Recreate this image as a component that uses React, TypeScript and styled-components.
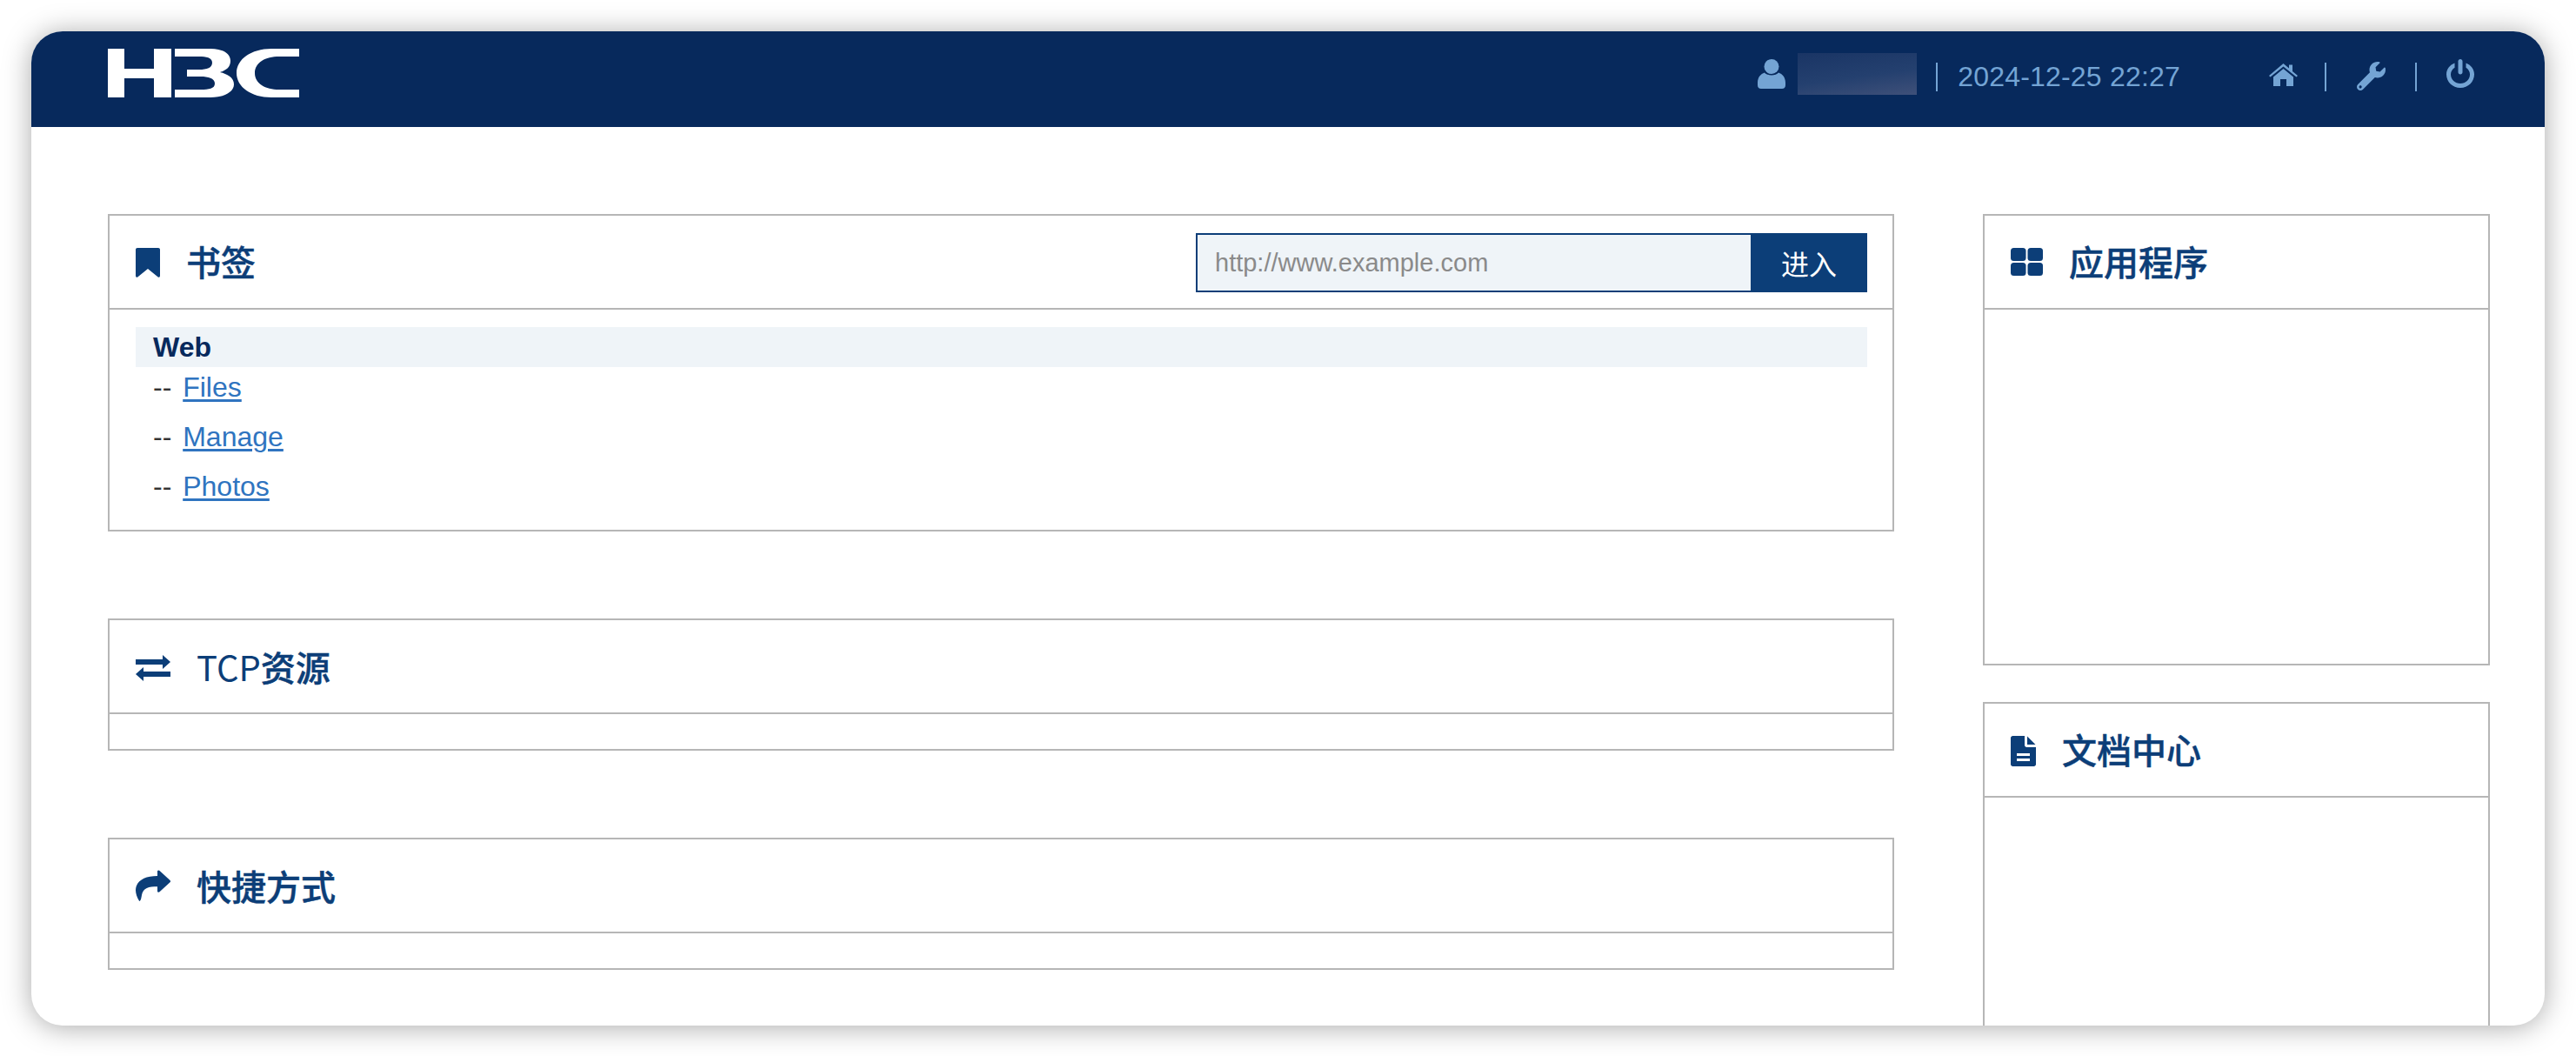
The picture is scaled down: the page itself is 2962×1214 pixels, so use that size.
import React from 'react';
import styled, { createGlobalStyle } from 'styled-components';
import { FaWrench } from 'react-icons/fa';

const Global = createGlobalStyle`
  html, body { margin: 0; padding: 0; background: #fff; }
  body { font-family: "Liberation Sans", "Noto Sans CJK SC", sans-serif; }
`;

const Page = styled.div`
  width: 2962px;
  height: 1214px;
  padding: 36px 36px 35px;
  box-sizing: border-box;
  overflow: hidden;
`;

const Win = styled.div`
  height: 100%;
  border-radius: 36px;
  background: #fff;
  overflow: hidden;
  display: flex;
  flex-direction: column;
  box-shadow: 0 2px 32px rgba(0, 0, 0, 0.34);
`;

const TopBar = styled.header`
  flex: none;
  height: 110px;
  box-sizing: border-box;
  background: #07295c;
  display: flex;
  align-items: center;
  justify-content: space-between;
  padding: 0 81px 12px 88px;
`;

const Logo = styled.svg`
  width: 220px;
  height: 56px;
  margin-top: -2px;
  fill: #fff;
  filter: blur(0.5px);
`;

const Status = styled.div`
  display: flex;
  align-items: center;
  color: #74a4d4;
`;

const Blur = styled.div`
  width: 137px;
  height: 48px;
  margin: 0 22px 0 14px;
  background: linear-gradient(172deg, #1a3565 0%, #24406f 55%, #3f5079 100%);
`;

const Sep = styled.span`
  width: 2px;
  height: 33px;
  margin-top: 7px;
  background: #74a4d4;
`;

const DateText = styled.span`
  font-size: 32px;
  line-height: 36px;
  letter-spacing: 0.2px;
  margin: 5px 102px 0 23px;
  white-space: nowrap;
`;

const Glyph = styled.svg<{ $w: number; $h: number; $mt?: number; $ml?: number; $mr?: number }>`
  width: ${(p) => p.$w}px;
  height: ${(p) => p.$h}px;
  margin: ${(p) => p.$mt ?? 0}px ${(p) => p.$mr ?? 0}px 0 ${(p) => p.$ml ?? 0}px;
  flex: none;
  fill: currentColor;
`;

const Wrench = styled(FaWrench)`
  width: 35px;
  height: 33px;
  margin: 5px 33px 0 34px;
`;

const Content = styled.main`
  flex: 1;
  min-height: 0;
  display: grid;
  grid-template-columns: 2054px 583px;
  column-gap: 102px;
  align-items: start;
  padding: 100px 63px 0 88px;
`;

const Column = styled.div<{ $gap: number }>`
  display: flex;
  flex-direction: column;
  gap: ${(p) => p.$gap}px;
`;

const Card = styled.section`
  border: 2px solid #b6b6b6;
`;

const CardHeader = styled.div<{ $pt?: number }>`
  height: 106px;
  box-sizing: border-box;
  padding: ${(p) => p.$pt ?? 2}px 29px 0 30px;
  display: flex;
  align-items: center;
  justify-content: space-between;
  color: #0c3e78;
`;

const CardBody = styled.div<{ $h: number }>`
  height: ${(p) => p.$h}px;
  box-sizing: border-box;
  border-top: 2px solid #b6b6b6;
`;

const BookmarkBody = styled(CardBody)`
  padding: 20px 29px 0 30px;
`;

const TitleRow = styled.div`
  display: flex;
  align-items: center;
  gap: 30px;
`;

const Title = styled.h2`
  margin: 0 0 4px;
  font-family: "Noto Sans CJK SC", "Liberation Sans", sans-serif;
  font-size: 40px;
  line-height: 56px;
  font-weight: 500;
  color: #0c3e78;
  -webkit-text-stroke: 0.5px #0c3e78;
`;

const LatinPart = styled.span`
  font-weight: 400;
  -webkit-text-stroke: 0;
`;

const Icon = styled.svg<{ $w: number; $h: number; $mb?: number }>`
  width: ${(p) => p.$w}px;
  height: ${(p) => p.$h}px;
  margin-bottom: ${(p) => p.$mb ?? 0}px;
  flex: none;
  fill: #0c3e78;
`;

const UrlForm = styled.form`
  display: flex;
  width: 772px;
  height: 68px;
  margin: 0;
`;

const UrlInput = styled.input`
  flex: 1;
  min-width: 0;
  box-sizing: border-box;
  height: 100%;
  border: 2px solid #0c3e78;
  border-right: 0;
  border-radius: 0;
  outline: none;
  background: #eff4f8;
  padding: 0 0 0 20px;
  font-family: "Liberation Sans", sans-serif;
  font-size: 29px;
  color: #333;
  &::placeholder { color: #8a8a8a; opacity: 1; }
`;

const Go = styled.button`
  width: 134px;
  height: 100%;
  border: 0;
  border-radius: 0;
  background: #0c3e78;
  color: #fff;
  font-family: "Noto Sans CJK SC", sans-serif;
  font-size: 32px;
  padding: 0;
`;

const GroupRow = styled.div`
  height: 46px;
  line-height: 46px;
  padding-left: 20px;
  background: #eff4f8;
  font-size: 32px;
  font-weight: 700;
  color: #07295c;
`;

const LinkRow = styled.div`
  height: 46px;
  line-height: 46px;
  padding-left: 20px;
  margin-bottom: 11px;
  font-size: 32px;
  color: #333;
`;

const Link = styled.a`
  margin-left: 4px;
  color: #2f74c0;
  text-decoration: underline;
  text-decoration-thickness: 3px;
  text-underline-offset: 3px;
`;

const links = ['Files', 'Manage', 'Photos'];

export default function App() {
  return (
    <>
      <Global />
      <Page>
        <Win>
          <TopBar>
            <Logo viewBox="0 0 220 56" aria-label="H3C">
              <path d="M0 0H19V23H53V0H73V56H53V34H19V56H0Z" />
              <path d="M77 0H118C133 0 141 6 141 14C141 21 136 25 129 27C137 29 145 33 145 41C145 50 133 56 118 56H77V47H107C116 47 123 46 123 40C123 34 115 32 107 32H91V24H105C114 24 120 22 120 16C120 10 113 9 105 9H77Z" />
              <path d="M220 0V9H197C181 9 169 16 169 28C169 40 181 47 197 47H220V56H188C165 56 148 44 148 28C148 12 165 0 188 0Z" />
            </Logo>
            <Status>
              <Glyph $w={32} $h={34} viewBox="0 0 32 34">
                <circle cx="16" cy="8.5" r="8.5" />
                <path d="M8 15.5C11 19.5 21 19.5 24 15.5C28.5 17 32 21 32 27V30C32 32.5 30.5 34 28 34H4C1.5 34 0 32.5 0 30V27C0 21 3.5 17 8 15.5Z" />
              </Glyph>
              <Blur />
              <Sep />
              <DateText>2024-12-25 22:27</DateText>
              <Glyph $w={33} $h={26} $mt={2} $mr={31} viewBox="0 0 33 26">
                <path d="M16.5 0L23 5.5V1.5H27V9L33 14L31.5 15.5L16.5 3.5L1.5 15.5L0 14Z" />
                <path d="M16.5 6L28 15.5V26H20V18H13V26H5V15.5Z" />
              </Glyph>
              <Sep />
              <Wrench />
              <Sep />
              <Glyph $w={32} $h={33} $mt={-1} $ml={34} viewBox="0 0 32 33">
                <path d="M16 0C17.4 0 18.5 1.1 18.5 2.5V15C18.5 16.4 17.4 17.5 16 17.5C14.6 17.5 13.5 16.4 13.5 15V2.5C13.5 1.1 14.6 0 16 0Z" />
                <path d="M9.5 4.5V9.8C6.6 11.6 5 14.5 5 17.5C5 23.6 10 28 16 28C22 28 27 23.6 27 17.5C27 14.5 25.4 11.6 22.5 9.8V4.5C28 6.6 32 11.6 32 17.5C32 26 25 33 16 33C7 33 0 26 0 17.5C0 11.6 4 6.6 9.5 4.5Z" />
              </Glyph>
            </Status>
          </TopBar>
          <Content>
            <Column $gap={100}>
              <Card>
                <CardHeader>
                  <TitleRow>
                    <Icon $w={28} $h={34} viewBox="0 0 28 34">
                      <path d="M2 0H26C27.2 0 28 .8 28 2V32C28 33.6 26.6 34.4 25.4 33.2L14 24L2.6 33.2C1.4 34.4 0 33.6 0 32V2C0 .8.8 0 2 0Z" />
                    </Icon>
                    <Title>书签</Title>
                  </TitleRow>
                  <UrlForm onSubmit={(e) => e.preventDefault()}>
                    <UrlInput placeholder="http://www.example.com" />
                    <Go type="submit">进入</Go>
                  </UrlForm>
                </CardHeader>
                <BookmarkBody $h={255}>
                  <GroupRow>Web</GroupRow>
                  {links.map((l) => (
                    <LinkRow key={l}>
                      -- <Link href="#">{l}</Link>
                    </LinkRow>
                  ))}
                </BookmarkBody>
              </Card>
              <Card>
                <CardHeader $pt={4}>
                  <TitleRow>
                    <Icon $w={40} $h={30} viewBox="0 0 40 30">
                      <path d="M0 5H31V0L40 8L31 16V11H0Z" />
                      <path d="M40 19H9V14L0 22L9 30V25H40Z" />
                    </Icon>
                    <Title>
                      <LatinPart>TCP</LatinPart>资源
                    </Title>
                  </TitleRow>
                </CardHeader>
                <CardBody $h={42} />
              </Card>
              <Card>
                <CardHeader $pt={4}>
                  <TitleRow>
                    <Icon $w={40} $h={36} $mb={4} viewBox="0 0 40 36">
                      <path d="M25 1.2C25.8.2 26.8.2 27.5 1L39.5 12C40.2 12.7 40.2 13.6 39.5 14.3L27.5 25.3C26.6 26.1 25 25.6 25 24.4V19.2C15 19.2 8.5 20.5 7 29C6.5 32 6 36 4.2 36C1.5 31.5 0 27 0 23.5C0 13 10 7 25 7Z" />
                    </Icon>
                    <Title>快捷方式</Title>
                  </TitleRow>
                </CardHeader>
                <CardBody $h={42} />
              </Card>
            </Column>
            <Column $gap={42}>
              <Card>
                <CardHeader>
                  <TitleRow>
                    <Icon $w={37} $h={32} $mb={3} viewBox="0 0 37 32">
                      <rect x="0" y="0" width="17.5" height="15" rx="3.5" />
                      <rect x="19.5" y="0" width="17.5" height="15" rx="3.5" />
                      <rect x="0" y="17" width="17.5" height="15" rx="3.5" />
                      <rect x="19.5" y="17" width="17.5" height="15" rx="3.5" />
                    </Icon>
                    <Title>应用程序</Title>
                  </TitleRow>
                </CardHeader>
                <CardBody $h={409} />
              </Card>
              <Card>
                <CardHeader>
                  <TitleRow>
                    <Icon $w={29} $h={35} viewBox="0 0 29 35">
                      <path d="M2.5 0H16V10.5C16 12 17 13 18.5 13H29V32.5C29 34 28 35 26.5 35H2.5C1 35 0 34 0 32.5V2.5C0 1 1 0 2.5 0ZM19 0.5L28.5 10H19ZM7 20V23H22V20ZM7 26V29H22V26Z" fillRule="evenodd" />
                    </Icon>
                    <Title>文档中心</Title>
                  </TitleRow>
                </CardHeader>
                <CardBody $h={500} />
              </Card>
            </Column>
          </Content>
        </Win>
      </Page>
    </>
  );
}
